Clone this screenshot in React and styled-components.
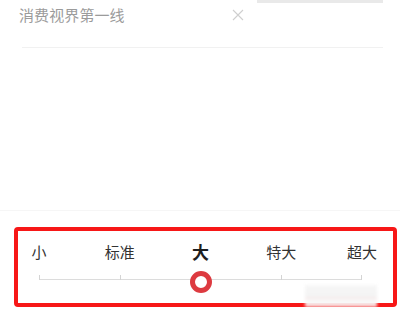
import React from "react";
import styled, { createGlobalStyle } from "styled-components";

const Global = createGlobalStyle`
  html, body {
    margin: 0;
    padding: 0;
    background: #ffffff;
    font-family: "Noto Sans CJK SC", "Noto Sans", sans-serif;
  }
`;

const Page = styled.div`
  width: 400px;
  height: 321px;
  overflow: hidden;
  position: relative;
  background: #fff;
  display: flex;
  flex-direction: column;
`;

const NewsRow = styled.div`
  display: flex;
  align-items: flex-start;
  height: 47px;
  padding: 0 17px 0 19px;
`;

const Title = styled.div`
  flex: 1;
  margin-top: 5px;
  font-size: 15px;
  line-height: 20px;
  color: #9b9b9b;
  letter-spacing: 0.1px;
`;

const Close = styled.svg`
  margin-top: 9px;
  margin-right: 13px;
  width: 12px;
  height: 12px;
`;

const ThumbEdge = styled.div`
  width: 126px;
  height: 3px;
  background: #e9e9e9;
`;

const Divider = styled.div`
  height: 1px;
  margin: 0 17px 0 22px;
  background: #f1f1f1;
`;

const Spacer = styled.div`
  flex: 1;
`;

const Panel = styled.div`
  border-top: 1px solid #f6f6f6;
  height: 111px;
  padding: 16px 3px 0 14px;
  box-sizing: border-box;
`;

const Highlight = styled.div`
  width: 383px;
  height: 80px;
  box-sizing: border-box;
  border: 4px solid #f71717;
  border-radius: 4px;
  padding: 11px 0 0 1px;
`;

const Labels = styled.div`
  width: 363px;
  display: flex;
  justify-content: space-between;
`;

const Label = styled.span`
  width: 40px;
  text-align: center;
  font-size: ${(p) => (p.$active ? "17px" : "15px")};
  font-weight: ${(p) => (p.$active ? 700 : 400)};
  line-height: 20px;
  color: ${(p) => (p.$active ? "#1e1e1e" : "#333")};
`;

const Track = styled.div`
  position: relative;
  width: 323px;
  height: 22px;
  margin: 9px 0 0 20px;
`;

const Line = styled.div`
  position: absolute;
  left: 0;
  right: 0;
  top: 8px;
  height: 1px;
  background: #dcdcdc;
`;

const Ticks = styled.div`
  position: absolute;
  left: 0;
  right: 0;
  top: 4px;
  display: flex;
  justify-content: space-between;
`;

const Tick = styled.div`
  width: 1px;
  height: 5px;
  background: #d4d4d4;
`;

const Knob = styled.div`
  position: absolute;
  top: 0;
  width: 22px;
  height: 22px;
  margin-left: -11px;
  box-sizing: border-box;
  border-radius: 50%;
  border: 5px solid #dd3a40;
  background: #fff;
`;

const Smudge = styled.div`
  position: absolute;
  left: 305px;
  top: 285px;
  width: 72px;
  height: 22px;
  background: linear-gradient(180deg, #f6f6f6 0%, #f2f2f2 55%, #f7e6e6 60%, #f8f8f8 70%);
  filter: blur(1.5px);
  opacity: 0.9;
`;

const sizes = ["小", "标准", "大", "特大", "超大"];
const current = 2;

export default function App() {
  return (
    <Page>
      <Global />
      <NewsRow>
        <Title>消费视界第一线</Title>
        <Close viewBox="0 0 12 12">
          <path d="M1 1 L11 11 M11 1 L1 11" stroke="#cfcfcf" strokeWidth="1.1" fill="none" />
        </Close>
        <ThumbEdge />
      </NewsRow>
      <Divider />
      <Spacer />
      <Panel>
        <Highlight>
          <Labels>
            {sizes.map((s, i) => (
              <Label key={s} $active={i === current}>
                {s}
              </Label>
            ))}
          </Labels>
          <Track>
            <Line />
            <Ticks>
              {sizes.map((s) => (
                <Tick key={s} />
              ))}
            </Ticks>
            <Knob style={{ left: `${(current / (sizes.length - 1)) * 100}%` }} />
          </Track>
        </Highlight>
      </Panel>
      <Smudge />
    </Page>
  );
}
